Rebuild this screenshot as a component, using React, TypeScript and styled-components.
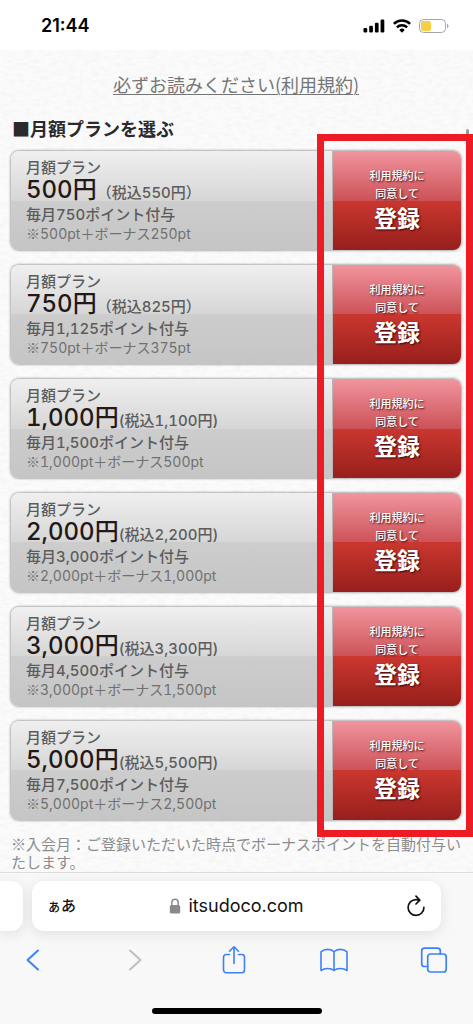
import React from "react";
import styled, { createGlobalStyle } from "styled-components";

const GlobalStyle = createGlobalStyle`
  * { box-sizing: border-box; }
  body {
    margin: 0;
    background: #f9f9f9;
    font-family: Inter, "Noto Sans CJK JP", sans-serif;
    -webkit-text-size-adjust: 100%;
  }
  button { border: 0; padding: 0; margin: 0; background: none; font: inherit; color: inherit; cursor: pointer; }
`;

const Screen = styled.div`
  min-height: 100vh;
  display: flex;
  flex-direction: column;
  overflow-x: hidden;
`;

const StatusBar = styled.header`
  height: 50px;
  padding: 2px 24px 0 41px;
  display: flex;
  align-items: center;
  justify-content: space-between;
  background: #fff;
`;

const Clock = styled.time`
  font-size: 18px;
  line-height: 24px;
  font-weight: 600;
  color: #000;
`;

const StatusIcons = styled.div`
  display: flex;
  align-items: center;
  gap: 8px;
`;

const Page = styled.main`
  position: relative;
  flex: 1;
  padding: 20px 12px 0 11px;
  background: #fbfbfb;
`;

const PaperTexture = styled.svg`
  position: absolute;
  inset: 0;
  width: 100%;
  height: 100%;
`;

const Content = styled.div`
  position: relative;
`;

const TermsLine = styled.p`
  margin: 0;
  text-align: center;
  font-size: 18px;
  line-height: 28px;
`;

const TermsLink = styled.a`
  color: #757575;
  font-family: "Noto Sans CJK JP", sans-serif;
  font-weight: 400;
  text-decoration: underline;
  text-decoration-thickness: 1px;
  text-underline-offset: 2px;
`;

const Heading = styled.h1`
  margin: 14px 0 9px;
  padding-left: 1px;
  font-family: "Noto Sans CJK JP", sans-serif;
  font-size: 18px;
  line-height: 28px;
  font-weight: 700;
  color: #2a2a2a;
`;

const Plans = styled.div`
  position: relative;
`;

const PlanList = styled.ul`
  margin: 0;
  padding: 0;
  list-style: none;
  display: flex;
  flex-direction: column;
  gap: 15px;
`;

const PlanCard = styled.li`
  display: flex;
  min-height: 99px;
  border-radius: 8px;
  overflow: hidden;
  background: linear-gradient(#efefef, #d6d6d6 50%, #cdcdcd 50%, #c5c5c5);
  box-shadow: 0 0 3px rgba(0, 0, 0, 0.6);
`;

const PlanText = styled.div`
  flex: 1;
  padding: 8px 0 0 15px;
  color: #5c5c5c;
  font-size: 15px;
  font-weight: 500;
  font-variant-numeric: tabular-nums;
  white-space: nowrap;
  border-right: 1px solid #b5b5b5;
`;

const PlanLabel = styled.div`
  line-height: 18px;
`;

const PriceLine = styled.div`
  line-height: 26px;
`;

const Price = styled.strong`
  font-size: 24px;
  font-weight: 500;
  color: #231815;
`;

const Points = styled.div`
  line-height: 18px;
`;

const Breakdown = styled.div`
  font-size: 14px;
  line-height: 18px;
  font-weight: 400;
  color: #707070;
`;

const ReferenceMark = styled.span`
  font-family: "Noto Sans CJK JP", sans-serif;
`;

const RegisterButton = styled.button`
  && {
    width: 128px;
    padding-bottom: 4px;
    display: flex;
    flex-direction: column;
    align-items: center;
    justify-content: center;
    color: #fff;
    font-family: "Noto Sans CJK JP", sans-serif;
    font-size: 11px;
    line-height: 18px;
    font-weight: 500;
    text-shadow: 1px 1px 2px rgba(40, 0, 0, 0.9);
    background: linear-gradient(#f1959e, #cc5258 50%, #cb372f 50%, #971f1c);
  }
`;

const RegisterWord = styled.span`
  font-size: 23px;
  line-height: 30px;
  font-weight: 700;
`;

const Highlight = styled.div`
  position: absolute;
  top: -17px;
  bottom: -17px;
  right: -12px;
  width: 156px;
  border: 7px solid #ed1c24;
  pointer-events: none;
`;

const ScrollThumb = styled.div`
  position: absolute;
  top: -22px;
  right: -8px;
  width: 3px;
  height: 5px;
  border-radius: 2px 2px 0 0;
  background: #999;
`;

const Note = styled.p`
  margin: 15px 0 1px;
  font-family: "Noto Sans CJK JP", sans-serif;
  font-size: 15px;
  line-height: 18px;
  font-weight: 400;
  color: #8c8c8c;
`;

const BrowserBar = styled.footer`
  padding: 8px 0 10px;
  background: #f8f8f8;
  border-top: 1px solid #dedede;
  position: relative;
`;

const TabStrip = styled.div`
  display: flex;
  gap: 9px;
  padding-right: 32px;
`;

const PreviousTab = styled.div`
  width: 23px;
  border-radius: 0 12px 12px 0;
  background: #fff;
  box-shadow: 0 3px 14px rgba(0, 0, 0, 0.1);
`;

const AddressBar = styled.div`
  flex: 1;
  height: 50px;
  padding: 0 15px;
  display: grid;
  grid-template-columns: 1fr auto 1fr;
  align-items: center;
  border-radius: 12px;
  background: #fff;
  color: #111;
  box-shadow: 0 3px 14px rgba(0, 0, 0, 0.1);
`;

const TextSize = styled.button`
  && { justify-self: start; font-size: 15px; font-weight: 500; line-height: 24px; }
`;

const SmallKana = styled.span`
  font-size: 14px;
`;

const Address = styled.button`
  && {
    display: flex;
    align-items: center;
    gap: 7px;
    font-size: 18px;
    line-height: 24px;
  }
`;

const ReloadButton = styled.button`
  && {
    justify-self: end;
    display: flex;
  }
`;

const Toolbar = styled.nav`
  display: flex;
  justify-content: space-between;
  padding: 14px 25px 0 19px;
`;

const ToolButton = styled.button<{ $muted?: boolean }>`
  && {
    height: 30px;
    display: flex;
    align-items: center;
    color: ${(p) => (p.$muted ? "#bfbfbf" : "#3b82f6")};
  }
`;

const HomeIndicator = styled.div`
  width: 170px;
  height: 6px;
  margin: 33px auto 0;
  border-radius: 3px;
  background: #000;
`;

interface Plan {
  price: string;
  taxed: string;
  points: string;
  breakdown: string;
}

const plans: Plan[] = [
  { price: "500円", taxed: "（税込550円）", points: "750", breakdown: "500pt＋ボーナス250pt" },
  { price: "750円", taxed: "（税込825円）", points: "1,125", breakdown: "750pt＋ボーナス375pt" },
  { price: "1,000円", taxed: "(税込1,100円)", points: "1,500", breakdown: "1,000pt＋ボーナス500pt" },
  { price: "2,000円", taxed: "(税込2,200円)", points: "3,000", breakdown: "2,000pt＋ボーナス1,000pt" },
  { price: "3,000円", taxed: "(税込3,300円)", points: "4,500", breakdown: "3,000pt＋ボーナス1,500pt" },
  { price: "5,000円", taxed: "(税込5,500円)", points: "7,500", breakdown: "5,000pt＋ボーナス2,500pt" },
];

const stroke = {
  fill: "none",
  stroke: "currentColor",
  strokeLinecap: "round" as const,
  strokeLinejoin: "round" as const,
};

function SignalIcon() {
  return (
    <svg width="22" height="14" viewBox="0 0 22 14" aria-hidden="true">
      <rect x="0.5" y="9" width="3.7" height="4.5" rx="1.2" />
      <rect x="6.2" y="6.8" width="3.7" height="6.7" rx="1.2" />
      <rect x="11.9" y="3.8" width="3.7" height="9.7" rx="1.2" />
      <rect x="17.6" y="0.5" width="3.7" height="13" rx="1.2" />
    </svg>
  );
}

function WifiIcon() {
  return (
    <svg width="18" height="14" viewBox="0 0 18 14" fill="none" stroke="#000" strokeWidth="2.5" aria-hidden="true">
      <path d="M0.9 4.9a11.6 11.6 0 0 1 16.2 0" />
      <path d="M3.9 8.3a7.3 7.3 0 0 1 10.2 0" />
      <path d="M9 13.7 6.3 10.9a3.9 3.9 0 0 1 5.4 0Z" fill="#000" stroke="none" />
    </svg>
  );
}

function BatteryIcon() {
  return (
    <svg width="30" height="14" viewBox="0 0 30 14" aria-hidden="true">
      <rect x="0.5" y="0.5" width="26" height="13" rx="4" fill="#fff" stroke="#a6a6a6" />
      <rect x="2" y="2" width="10" height="10" rx="2.2" fill="#f7ce46" />
      <path d="M28 4.8c2 .7 2 3.7 0 4.4Z" fill="#a6a6a6" />
    </svg>
  );
}

function LockIcon() {
  return (
    <svg width="12" height="16" viewBox="0 0 12 16" aria-hidden="true">
      <path d="M2.8 8V4.4a3.2 3.2 0 0 1 6.4 0V8" fill="none" stroke="#8a8a8e" strokeWidth="1.5" />
      <rect x="0.8" y="7" width="10.4" height="8.5" rx="1.6" fill="#8a8a8e" />
    </svg>
  );
}

function ReloadIcon() {
  return (
    <svg width="20" height="22" viewBox="0 0 20 22" {...stroke} strokeWidth="1.7" aria-hidden="true">
      <path d="M17.9 12.4A7.9 7.9 0 1 1 10 4.6c1.2 0 2.4.2 3.3.6" />
      <path d="M10 1.2 13.8 5.1 10 9" />
    </svg>
  );
}

function App() {
  return (
    <>
      <GlobalStyle />
      <Screen>
        <StatusBar>
          <Clock>21:44</Clock>
          <StatusIcons>
            <SignalIcon />
            <WifiIcon />
            <BatteryIcon />
          </StatusIcons>
        </StatusBar>

        <Page>
          <PaperTexture aria-hidden="true">
            <filter id="paper" x="0" y="0" width="100%" height="100%">
              <feTurbulence type="fractalNoise" baseFrequency="0.12 0.3" numOctaves="2" seed="4" />
              <feColorMatrix values="0 0 0 0 0.6  0 0 0 0 0.6  0 0 0 0 0.6  0.3 0 0 0 -0.12" />
            </filter>
            <rect width="100%" height="100%" filter="url(#paper)" />
          </PaperTexture>
          <Content>
            <TermsLine>
              <TermsLink href="#terms">必ずお読みください(利用規約)</TermsLink>
            </TermsLine>
            <Heading>■月額プランを選ぶ</Heading>
            <Plans>
              <PlanList>
                {plans.map((plan) => (
                  <PlanCard key={plan.price}>
                    <PlanText>
                      <PlanLabel>月額プラン</PlanLabel>
                      <PriceLine>
                        <Price>{plan.price}</Price>
                        {plan.taxed}
                      </PriceLine>
                      <Points>毎月{plan.points}ポイント付与</Points>
                      <Breakdown>
                        <ReferenceMark>※</ReferenceMark>
                        {plan.breakdown}
                      </Breakdown>
                    </PlanText>
                    <RegisterButton type="button">
                      <span>利用規約に</span>
                      <span>同意して</span>
                      <RegisterWord>登録</RegisterWord>
                    </RegisterButton>
                  </PlanCard>
                ))}
              </PlanList>
              <Highlight />
              <ScrollThumb />
            </Plans>
            <Note>※入会月：ご登録いただいた時点でボーナスポイントを自動付与いたします。</Note>
          </Content>
        </Page>

        <BrowserBar>
          <TabStrip>
            <PreviousTab />
            <AddressBar>
              <TextSize type="button">
                <SmallKana>ぁ</SmallKana>あ
              </TextSize>
              <Address type="button">
                <LockIcon />
                itsudoco.com
              </Address>
              <ReloadButton type="button" aria-label="再読み込み">
                <ReloadIcon />
              </ReloadButton>
            </AddressBar>
          </TabStrip>
          <Toolbar>
            <ToolButton type="button" aria-label="戻る">
              <svg width="28" height="28" viewBox="0 0 28 28" {...stroke} strokeWidth="2">
                <path d="M19 4.5 8.5 14 19 23.5" />
              </svg>
            </ToolButton>
            <ToolButton type="button" aria-label="進む" $muted>
              <svg width="28" height="28" viewBox="0 0 28 28" {...stroke} strokeWidth="2">
                <path d="M11 4.5 21.5 14 11 23.5" />
              </svg>
            </ToolButton>
            <ToolButton type="button" aria-label="共有">
              <svg width="28" height="30" viewBox="0 0 28 30" {...stroke} strokeWidth="1.6">
                <path d="M9.5 9.5H6.2a2.7 2.7 0 0 0-2.7 2.7V25a2.7 2.7 0 0 0 2.7 2.7h15.6a2.7 2.7 0 0 0 2.7-2.7V12.2a2.7 2.7 0 0 0-2.7-2.7h-3.3" />
                <path d="M14 18.5V2M9.5 6.3 14 1.8l4.5 4.5" />
              </svg>
            </ToolButton>
            <ToolButton type="button" aria-label="ブックマーク">
              <svg width="28" height="28" viewBox="0 0 28 28" {...stroke} strokeWidth="1.6">
                <path d="M14 5.8C11 2.6 4.5 2.6 1 5.8V24.5c3.5-2.7 10-2.7 13 0 3-2.7 9.5-2.7 13 0V5.8C23.5 2.6 17 2.6 14 5.8V24.5" />
              </svg>
            </ToolButton>
            <ToolButton type="button" aria-label="タブ">
              <svg width="28" height="28" viewBox="0 0 28 28" {...stroke} strokeWidth="1.7">
                <rect x="7.7" y="8" width="18.5" height="18" rx="2.8" />
                <path d="M7.7 20.5H4.5a2.8 2.8 0 0 1-2.8-2.8V5a2.8 2.8 0 0 1 2.8-2.8h13a2.8 2.8 0 0 1 2.8 2.8v3" />
              </svg>
            </ToolButton>
          </Toolbar>
          <HomeIndicator />
        </BrowserBar>
      </Screen>
    </>
  );
}

export default App;
